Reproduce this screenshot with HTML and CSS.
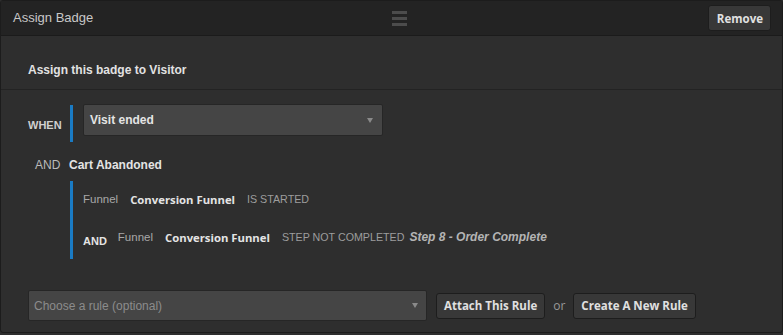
FILE: index.html
```html
<!DOCTYPE html>
<html lang="en">

<head>
    <meta charset="UTF-8">
    <title>Assign Badge</title>
    <link rel="stylesheet" href="styles.css">
</head>

<body>
    <div class="panel">
        <div class="panel-head">
            <span class="panel-title">Assign Badge</span>
            <span class="drag-handle"><i></i><i></i><i></i></span>
            <div class="head-actions">
                <button class="btn">Remove</button>
            </div>
        </div>

        <div class="section-title">Assign this badge to Visitor</div>

        <div class="rules">
            <div class="rule-row">
                <span class="rule-key">WHEN</span>
                <div class="bar-group">
                    <div class="select select-event">
                        <span>Visit ended</span>
                        <span class="caret"></span>
                    </div>
                </div>
            </div>

            <div class="and-row">
                <span class="and-key">AND</span>
                <span class="and-name">Cart Abandoned</span>
            </div>

            <div class="bar-group conditions">
                <div class="cond">
                    <span class="muted">Funnel</span>
                    <span class="strong">Conversion Funnel</span>
                    <span class="state">IS STARTED</span>
                </div>
                <div class="cond">
                    <span class="cond-and">AND</span>
                    <span class="muted">Funnel</span>
                    <span class="strong">Conversion Funnel</span>
                    <span class="state">STEP NOT COMPLETED</span>
                    <span class="step">Step 8 - Order Complete</span>
                </div>
            </div>
        </div>

        <div class="attach-row">
            <div class="select select-rule">
                <span>Choose a rule (optional)</span>
                <span class="caret"></span>
            </div>
            <button class="btn">Attach This Rule</button>
            <span class="or">or</span>
            <button class="btn">Create A New Rule</button>
        </div>
    </div>
</body>

</html>
```

FILE: styles.css
```css
* {
    margin: 0;
    padding: 0;
    box-sizing: border-box;
}

body {
    background: #2e2e2e;
    color: #ddd;
    font-family: 'Liberation Sans', Arial, sans-serif;
    width: 783px;
    height: 335px;
    overflow: hidden;
}

.panel {
    width: 783px;
    height: 333px;
    border: 1px solid #1c1c1c;
    border-radius: 3px;
    background: #2e2e2e;
}

.panel-head {
    height: 35px;
    background: #232323;
    border-bottom: 1px solid #1b1b1b;
    display: grid;
    grid-template-columns: 1fr auto 1fr;
    align-items: center;
    padding: 0 11px 0 12px;
}

.panel-title {
    font-size: 13px;
    color: #c8c8c8;
    margin-top: -1px;
}

.drag-handle {
    display: flex;
    flex-direction: column;
    gap: 3px;
    width: 15px;
    margin-left: 14px;
}

.drag-handle i {
    display: block;
    height: 3px;
    background: #4c4c4c;
}

.head-actions {
    display: flex;
    justify-content: flex-end;
}

.btn {
    font-family: 'Open Sans', sans-serif;
    font-weight: 700;
    font-size: 11.5px;
    color: #e0e0e0;
    background: #383838;
    border: 1px solid #1d1d1d;
    border-radius: 3px;
    height: 26px;
    padding: 0 8px;
    cursor: pointer;
}

.panel-head .btn {
    padding: 0 7px 0 8px;
}

.section-title {
    font-size: 12px;
    font-weight: bold;
    color: #e2e2e2;
    padding: 27px 0 0 27px;
    height: 54px;
    border-bottom: 1px solid #232323;
}

.rules {
    padding: 15px 0 0 27px;
}

.rule-row {
    display: flex;
    align-items: center;
}

.rule-key {
    font-size: 11px;
    font-weight: bold;
    color: #d0d0d0;
    width: 42px;
    margin-top: 2px;
}

.bar-group {
    border-left: 3px solid #1a7bc4;
    padding-left: 10px;
}

.rule-row .bar-group {
    height: 37px;
}

.select {
    display: flex;
    align-items: center;
    justify-content: space-between;
    background: #454545;
    border: 1px solid #262626;
    border-radius: 2px;
}

.select-event {
    width: 300px;
    height: 32px;
    padding: 0 9px 0 6px;
    font-size: 12px;
    font-weight: bold;
    color: #e4e4e4;
    margin-top: -1px;
}

.caret {
    width: 0;
    height: 0;
    border-left: 3.5px solid transparent;
    border-right: 3.5px solid transparent;
    border-top: 5px solid #8a8a8a;
}

.and-row {
    display: flex;
    align-items: center;
    height: 39px;
    padding: 6px 0 0 7px;
}

.and-key {
    font-size: 12px;
    color: #bbb;
    width: 34px;
}

.and-name {
    font-size: 12px;
    font-weight: bold;
    color: #e4e4e4;
}

.conditions {
    margin-left: 42px;
    height: 78px;
    padding-top: 9px;
}

.cond {
    display: flex;
    align-items: center;
    height: 18px;
    font-size: 11px;
}

.cond + .cond {
    margin-top: 20px;
}

.muted {
    color: #a8a8a8;
    font-size: 11.5px;
    margin-right: 12px;
}

.strong {
    font-family: 'Open Sans', sans-serif;
    font-weight: 700;
    font-size: 11.3px;
    color: #e4e4e4;
    margin-right: 12px;
}

.state {
    color: #9d9d9d;
    font-size: 10.7px;
    margin-right: 5px;
}

.cond-and {
    font-size: 11px;
    font-weight: bold;
    color: #e4e4e4;
    margin: 7px 11px 0 0;
}

.step {
    font-size: 12px;
    font-weight: bold;
    font-style: italic;
    color: #b4b4b4;
}

.attach-row {
    display: flex;
    align-items: center;
    gap: 8px;
    padding: 31px 0 0 27px;
}

.select-rule {
    width: 399px;
    height: 31px;
    padding: 0 8px 0 5px;
    font-size: 12px;
    color: #8c8c8c;
    margin-right: 1px;
}

.attach-row .btn {
    height: 26px;
    padding: 0 7px;
}

.or {
    font-family: 'Open Sans', sans-serif;
    font-size: 12px;
    color: #999;
}
```
